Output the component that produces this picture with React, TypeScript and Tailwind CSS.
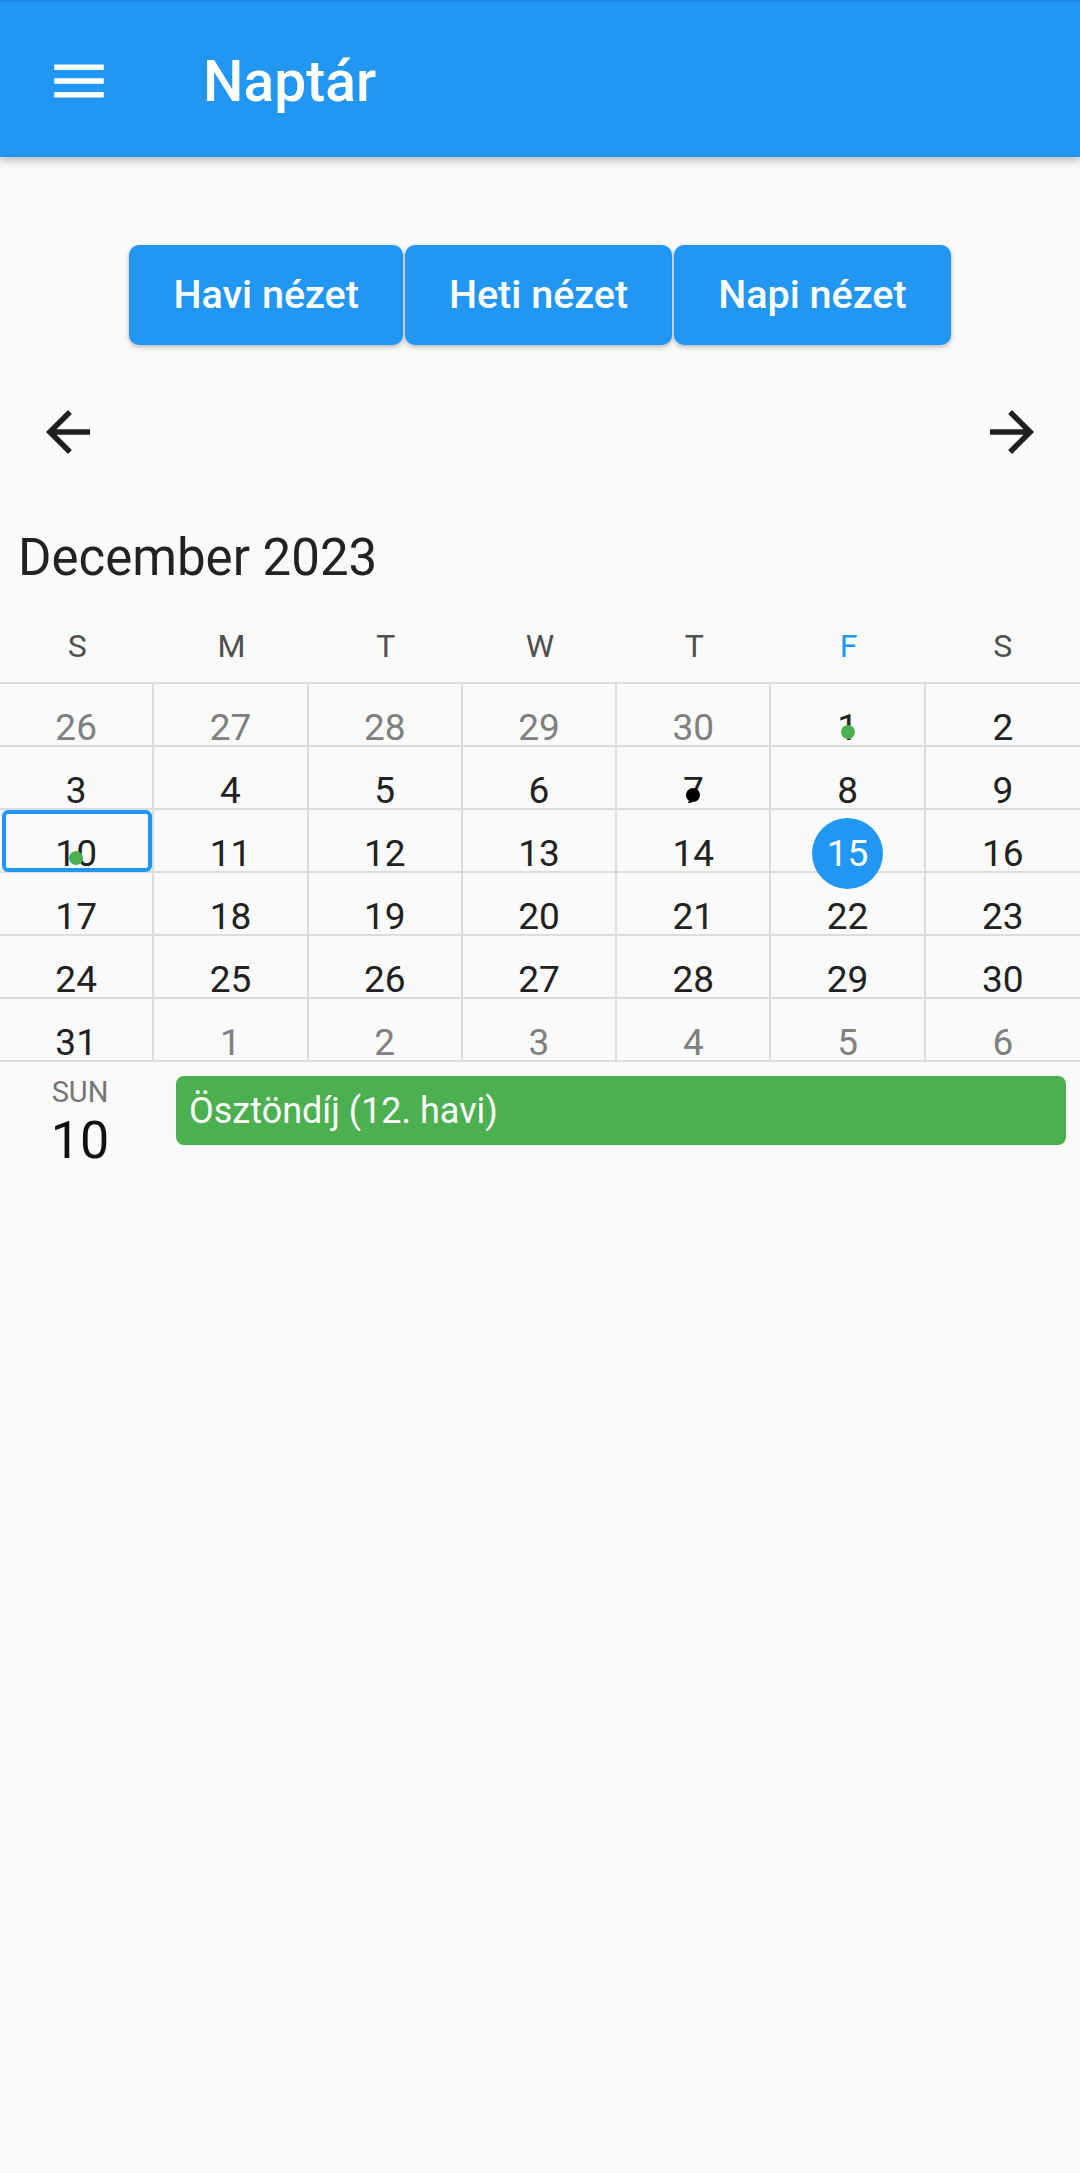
import React from "react";

type Day = { n: number; out?: boolean; dot?: "green" | "black"; today?: boolean; selected?: boolean };

const weeks: Day[][] = [
  [{ n: 26, out: true }, { n: 27, out: true }, { n: 28, out: true }, { n: 29, out: true }, { n: 30, out: true }, { n: 1, dot: "green" }, { n: 2 }],
  [{ n: 3 }, { n: 4 }, { n: 5 }, { n: 6 }, { n: 7, dot: "black" }, { n: 8 }, { n: 9 }],
  [{ n: 10, dot: "green", selected: true }, { n: 11 }, { n: 12 }, { n: 13 }, { n: 14 }, { n: 15, today: true }, { n: 16 }],
  [{ n: 17 }, { n: 18 }, { n: 19 }, { n: 20 }, { n: 21 }, { n: 22 }, { n: 23 }],
  [{ n: 24 }, { n: 25 }, { n: 26 }, { n: 27 }, { n: 28 }, { n: 29 }, { n: 30 }],
  [{ n: 31 }, { n: 1, out: true }, { n: 2, out: true }, { n: 3, out: true }, { n: 4, out: true }, { n: 5, out: true }, { n: 6, out: true }],
];

const dows = ["S", "M", "T", "W", "T", "F", "S"];

function MenuIcon() {
  return (
    <svg width="66" height="66" viewBox="0 0 24 24" fill="#ffffff">
      <path d="M3 18h18v-2H3v2zm0-5h18v-2H3v2zm0-7v2h18V6H3z" />
    </svg>
  );
}

function ArrowBack() {
  return (
    <svg width="66" height="66" viewBox="0 0 24 24" fill="#1f1f1f">
      <path d="M20 11H7.83l5.59-5.59L12 4l-8 8 8 8 1.41-1.41L7.83 13H20v-2z" />
    </svg>
  );
}

function ArrowForward() {
  return (
    <svg width="66" height="66" viewBox="0 0 24 24" fill="#1f1f1f">
      <path d="M12 4l-1.41 1.41L16.17 11H4v2h12.17l-5.58 5.59L12 20l8-8z" />
    </svg>
  );
}

function Cell({ d, last }: { d: Day; last: boolean }) {
  return (
    <div
      className={`relative h-[63px] border-b-2 border-[#dcdcdc] flex justify-center ${last ? "" : "border-r-2"}`}
    >
      <div
        className={`relative mt-[8px] w-[71px] h-[71px] shrink-0 rounded-full flex items-center justify-center text-[37px] leading-none ${
          d.today ? "bg-[#2196F3] text-white z-10" : d.out ? "text-[#808080]" : "text-[#212121]"
        }`}
      >
        <span>{d.n}</span>
        {d.dot === "green" && (
          <span className="absolute left-1/2 -translate-x-1/2 top-[33px] w-[14px] h-[14px] rounded-full bg-[#4CAF50]" />
        )}
        {d.dot === "black" && (
          <span className="absolute left-1/2 -translate-x-1/2 top-[33px] w-[14px] h-[14px] rounded-full bg-black" />
        )}
      </div>
      {d.selected && (
        <div className="absolute left-[2px] right-[0px] top-[0px] bottom-[-1px] border-[4px] border-[#2196F3] rounded-[6px]" />
      )}
    </div>
  );
}

export default function App() {
  return (
    <div
      className="w-[1080px] min-h-[2173px] bg-[#fafafa] flex flex-col"
      style={{ fontFamily: "Roboto, 'Noto Sans', Arial, sans-serif" }}
    >
      {/* App bar */}
      <header className="relative z-10 h-[157px] bg-[#2196F3] border-t-2 border-[#1E88E5] flex items-center pt-[3px] shadow-[0_3px_9px_rgba(0,0,0,0.28)]">
        <div className="w-[154px] flex justify-center pl-[3px]">
          <MenuIcon />
        </div>
        <div className="pl-[49px] text-white text-[57px] font-medium leading-none">Naptár</div>
      </header>

      {/* View buttons */}
      <div className="mt-[88px] flex justify-center gap-[2px]">
        {["Havi nézet", "Heti nézet", "Napi nézet"].map((t) => (
          <button
            key={t}
            className="h-[100px] px-[44px] rounded-[10px] bg-[#2196F3] text-white text-[39.5px] font-medium leading-none shadow-[0_2px_5px_rgba(0,0,0,0.28)]"
          >
            {t}
          </button>
        ))}
      </div>

      {/* Arrows */}
      <div className="mt-[54px] px-[35px] flex justify-between">
        <ArrowBack />
        <ArrowForward />
      </div>

      {/* Month title */}
      <div className="mt-[63px] pl-[18px] text-[51px] leading-[60px] text-[#222222]">December 2023</div>

      {/* Days of week */}
      <div className="mt-[38px] grid grid-cols-7 h-[40px]">
        {dows.map((d, i) => (
          <div
            key={i}
            className={`flex items-center justify-center text-[32px] leading-[40px] ${
              i === 5 ? "text-[#2196F3]" : "text-[#4f4f4f]"
            }`}
          >
            {d}
          </div>
        ))}
      </div>

      {/* Month grid */}
      <div className="mt-[16px] border-t-2 border-[#dcdcdc] grid grid-cols-7">
        {weeks.map((w, wi) =>
          w.map((d, di) => <Cell key={`${wi}-${di}`} d={d} last={di === 6} />)
        )}
      </div>

      {/* Selected day events */}
      <div className="flex items-start">
        <div className="w-[160px] flex flex-col items-center pt-[13px]">
          <div className="text-[29px] leading-[34px] text-[#757575]">SUN</div>
          <div className="mt-[1px] text-[52px] leading-[61px] text-[#111111]">10</div>
        </div>
        <div className="mt-[14px] ml-[16px] w-[890px] h-[69px] rounded-[8px] bg-[#4CAF50] flex items-center pl-[13px] text-white text-[36px] leading-none">
          Ösztöndíj (12. havi)
        </div>
      </div>
    </div>
  );
}
